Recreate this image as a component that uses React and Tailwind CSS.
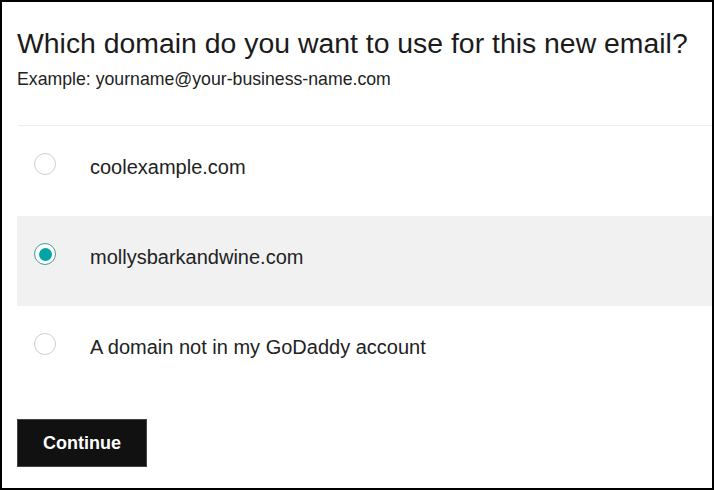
import { useState } from 'react';

const domains = [
    'coolexample.com',
    'mollysbarkandwine.com',
    'A domain not in my GoDaddy account',
];

function Radio({ checked }) {
    return (
        <span
            className={
                'flex items-center justify-center w-[22px] h-[22px] rounded-full bg-white shrink-0 ' +
                (checked ? 'border-[1.5px] border-[#3f9c9d]' : 'border border-[#cfcfcf]')
            }
        >
            {checked && <span className="w-[13px] h-[13px] rounded-full bg-[#00a4a6]" />}
        </span>
    );
}

export default function App() {
    const [selected, setSelected] = useState(1);

    return (
        <div
            className="w-[714px] h-[490px] border-2 border-black bg-white text-[#1b1b1b] overflow-hidden"
            style={{ fontFamily: '"Liberation Sans", Arial, sans-serif' }}
        >
            <div className="pl-[15px] pt-[25px]">
                <h1 className="text-[28.4px] leading-[32px] font-normal">
                    Which domain do you want to use for this new email?
                </h1>
                <p className="text-[17.7px] leading-[20px] mt-[10px] text-[#222]">
                    Example: yourname@your-business-name.com
                </p>

                <div className="mt-[36px] h-px bg-[#efefef] ml-[1px]" />

                <div className="flex flex-col">
                    {domains.map((d, i) => (
                        <button
                            key={d}
                            type="button"
                            onClick={() => setSelected(i)}
                            className={
                                'flex items-start h-[90px] pl-[17px] pt-[27px] text-left ' +
                                (selected === i ? 'bg-[#f1f1f1]' : 'bg-white')
                            }
                        >
                            <Radio checked={selected === i} />
                            <span className="ml-[34px] mt-[3px] text-[20px] leading-[22px] text-[#222]">{d}</span>
                        </button>
                    ))}
                </div>

                <button
                    type="button"
                    className="mt-[23px] w-[130px] h-[48px] bg-[#111] text-white font-bold text-[18px] border border-[#444]"
                >
                    Continue
                </button>
            </div>
        </div>
    );
}
